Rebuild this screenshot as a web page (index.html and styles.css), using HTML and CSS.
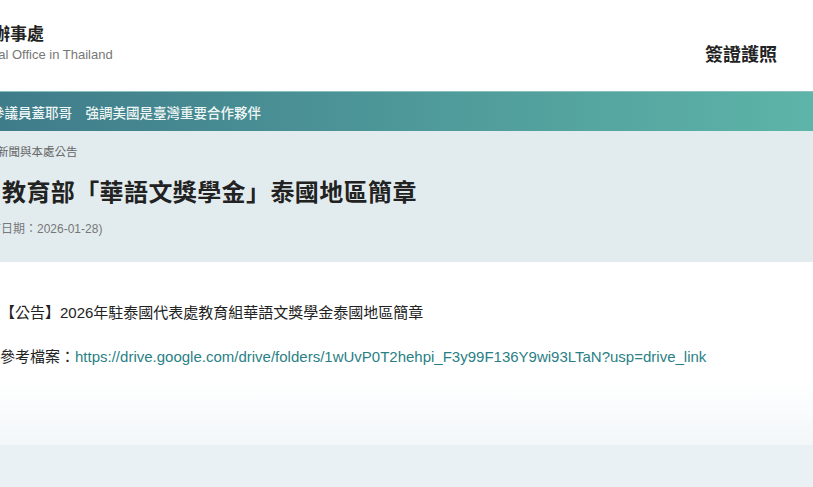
FILE: index.html
```html
<!DOCTYPE html>
<html lang="zh-TW">
<head>
    <meta charset="UTF-8">
    <meta name="viewport" content="width=device-width, initial-scale=1.0">
    <title>教育部「華語文獎學金」泰國地區簡章</title>
    <link rel="stylesheet" href="styles.css">
</head>
<body>
    <header class="site-header">
        <div class="brand">
            <div class="brand-zh">駐泰國台北經濟貿易辦事處</div>
            <div class="brand-en">Taipei Economic and Cultural Office in Thailand</div>
        </div>
        <nav class="main-nav">
            <a href="#">簽證護照</a>
        </nav>
    </header>

    <div class="ticker">
        <span class="ticker-text">參議員蓋耶哥　強調美國是臺灣重要合作夥伴</span>
    </div>

    <section class="page-head">
        <div class="breadcrumb">新聞與本處公告</div>
        <h1 class="page-title">教育部「華語文獎學金」泰國地區簡章</h1>
        <div class="post-date">(發布日期：2026-01-28)</div>
    </section>

    <main class="content">
        <p>【公告】2026年駐泰國代表處教育組華語文獎學金泰國地區簡章</p>
        <p class="ref">參考檔案：<a href="#">https://drive.google.com/drive/folders/1wUvP0T2hehpi_F3y99F136Y9wi93LTaN?usp=drive_link</a></p>
    </main>

    <footer class="site-footer"></footer>
</body>
</html>
```

FILE: styles.css
```css
:root {
    --teal-dark: #3f7c8a;
    --teal-light: #5db4a8;
    --head-bg: #e2ecef;
    --link-color: #2a7f86;
}

body {
    margin: 0;
    padding: 0;
    background: #eaf1f4;
    font-family: 'Liberation Sans', 'Noto Sans CJK TC', sans-serif;
    color: #222;
    overflow: hidden;
}

.site-header {
    height: 91px;
    background: white;
    display: flex;
    justify-content: space-between;
}

.brand {
    margin-left: -160px;
    padding-top: 25px;
}

.brand-zh {
    font-size: 17px;
    line-height: 20px;
    font-weight: bold;
    color: #222;
}

.brand-en {
    margin-top: 2px;
    font-size: 13px;
    line-height: 16px;
    color: #777;
}

.main-nav {
    padding-top: 44px;
    padding-right: 36px;
}

.main-nav a {
    font-size: 18px;
    line-height: 22px;
    font-weight: bold;
    color: #222;
    text-decoration: none;
}

.ticker {
    height: 39px;
    border-top: 1px solid #8bbdbd;
    background: linear-gradient(90deg, var(--teal-dark), var(--teal-light));
    display: flex;
    align-items: center;
}

.ticker-text {
    margin-left: -9px;
    font-size: 13.5px;
    font-weight: 500;
    color: #eef6f6;
}

.page-head {
    height: 131px;
    box-sizing: border-box;
    padding-top: 13px;
    background: var(--head-bg);
}

.breadcrumb {
    margin-left: -3px;
    font-size: 11.5px;
    line-height: 16px;
    color: #666;
}

.page-title {
    margin: 17px 0 0 2px;
    font-size: 24px;
    line-height: 32px;
    font-weight: bold;
    letter-spacing: 0.4px;
    color: #222;
}

.post-date {
    margin: 12px 0 0 -27px;
    font-size: 12px;
    line-height: 16px;
    color: #777;
}

.content {
    height: 183px;
    box-sizing: border-box;
    padding-top: 40px;
    background: linear-gradient(#fff 0%, #fff 64%, #f3f7f9 100%);
}

.content p {
    margin: 0;
    font-size: 15px;
    line-height: 22px;
    color: #222;
}

.content .ref {
    margin-top: 22px;
}

.content a {
    color: var(--link-color);
    text-decoration: none;
}

.site-footer {
    height: 60px;
    background: #eaf1f4;
}
```
